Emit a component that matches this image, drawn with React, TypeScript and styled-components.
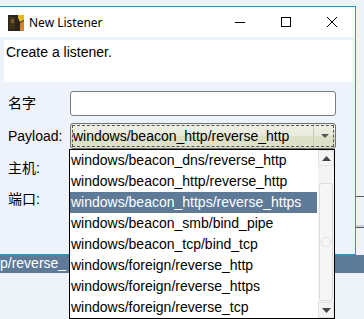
import React from 'react';
import styled, { createGlobalStyle } from 'styled-components';

const GlobalStyle = createGlobalStyle`
  html, body { margin: 0; padding: 0; }
  body { background: #eef2f9; font-family: "Liberation Sans", Arial, sans-serif; }
`;

const payloads = [
    'windows/beacon_dns/reverse_http',
    'windows/beacon_http/reverse_http',
    'windows/beacon_https/reverse_https',
    'windows/beacon_smb/bind_pipe',
    'windows/beacon_tcp/bind_tcp',
    'windows/foreign/reverse_http',
    'windows/foreign/reverse_https',
    'windows/foreign/reverse_tcp',
];

const App: React.FC = () => {
    const selected = 2;

    return (
        <Desktop>
            <GlobalStyle />
            <BackApp>
                <BackTop>
                    <BackSide />
                </BackTop>
                <BackRow>p/reverse_</BackRow>
            </BackApp>

            <Window>
                <TitleBar>
                    <AppIcon viewBox="0 0 16 16">
                        <rect width="16" height="16" fill="#2a241a" />
                        <rect x="1" y="2" width="6" height="12" fill="#3e321a" />
                        <path d="M10 0 L16 0 L16 5 L12 7 L10 3 Z" fill="#e9b81c" />
                        <path d="M12 8 L16 6 L16 16 L12 16 Z" fill="#d9812c" />
                        <rect x="3" y="4" width="3" height="4" fill="#7a5d26" />
                    </AppIcon>
                    <Title>New Listener</Title>
                    <Controls>
                        <CtrlButton>
                            <svg width="12" height="12" viewBox="0 0 12 12"><path d="M1 6.5 H11" stroke="#000" strokeWidth="1" /></svg>
                        </CtrlButton>
                        <CtrlButton>
                            <svg width="12" height="12" viewBox="0 0 12 12"><rect x="1.5" y="1.5" width="9" height="9" fill="none" stroke="#000" strokeWidth="1" /></svg>
                        </CtrlButton>
                        <CtrlButton>
                            <svg width="12" height="12" viewBox="0 0 12 12"><path d="M1 1 L11 11 M11 1 L1 11" stroke="#000" strokeWidth="1" /></svg>
                        </CtrlButton>
                    </Controls>
                </TitleBar>

                <Client>
                    <Description>Create a listener.</Description>
                    <Form>
                        <FieldRow $h={32}>
                            <Label $cjk>名字</Label>
                            <TextInput />
                        </FieldRow>
                        <FieldRow $h={33}>
                            <Label>Payload:</Label>
                            <Combo>
                                <ComboText>windows/beacon_http/reverse_http</ComboText>
                                <ComboArrow>
                                    <svg width="8" height="5" viewBox="0 0 8 5"><path d="M0 0 H8 L4 4 Z" fill="#555" /></svg>
                                </ComboArrow>
                            </Combo>
                        </FieldRow>
                        <FieldRow $h={31}>
                            <Label $cjk>主机:</Label>
                        </FieldRow>
                        <FieldRow $h={30}>
                            <Label $cjk>端口:</Label>
                        </FieldRow>
                    </Form>
                </Client>
            </Window>

            <DropList>
                <Items>
                    {payloads.map((p, i) => (
                        <Item key={p} $active={i === selected}>{p}</Item>
                    ))}
                </Items>
                <ScrollBar>
                    <ScrollBtn>
                        <svg width="9" height="5" viewBox="0 0 9 5"><path d="M0 5 H9 L4.5 0 Z" fill="#444" /></svg>
                    </ScrollBtn>
                    <Track>
                        <Thumb>
                            <Grip />
                        </Thumb>
                    </Track>
                    <ScrollBtn>
                        <svg width="9" height="5" viewBox="0 0 9 5"><path d="M0 0 H9 L4.5 5 Z" fill="#444" /></svg>
                    </ScrollBtn>
                </ScrollBar>
            </DropList>
        </Desktop>
    );
}
export default App;


const Desktop = styled.div`
    position: relative;
    width: 364px;
    height: 319px;
    overflow: hidden;
    background: #eef2f9;
`;

const BackApp = styled.div`
    position: absolute;
    inset: 0;
    display: flex;
    flex-direction: column;
`;

const BackTop = styled.div`
    height: 255px;
    display: flex;
    justify-content: flex-end;
`;

const BackSide = styled.div`
    width: 8px;
    margin-top: 196px;
    height: 30px;
    border-top: 1px solid #555a66;
    border-bottom: 1px solid #555a66;
    box-shadow: inset 0 -2px 0 #c9d2e2;
`;

const BackRow = styled.div`
    height: 18px;
    background: #5d7a98;
    color: #fff;
    font-size: 14px;
    line-height: 17px;
    white-space: nowrap;
`;

const Window = styled.div`
    position: absolute;
    left: -1px;
    top: 6px;
    width: 355px;
    height: 247px;
    border: 1px solid #1aa0c4;
    background: #eef2fa;
    display: flex;
    flex-direction: column;
`;

const TitleBar = styled.div`
    height: 30px;
    background: #fff;
    display: flex;
    align-items: center;
    padding-left: 8px;
`;

const AppIcon = styled.svg`
    width: 16px;
    height: 16px;
    margin-top: 1px;
`;

const Title = styled.span`
    margin-left: 5px;
    font-family: "Noto Sans", "Open Sans", sans-serif;
    font-size: 12px;
    color: #000;
    flex: 1;
`;

const Controls = styled.div`
    display: flex;
    height: 100%;
`;

const CtrlButton = styled.div`
    width: 46px;
    display: flex;
    align-items: center;
    justify-content: center;
`;

const Client = styled.div`
    flex: 1;
    display: flex;
    flex-direction: column;
    padding: 3px 2px 0 4px;
`;

const Description = styled.div`
    height: 42px;
    background: #fff;
    padding: 4px 2px 0;
    box-sizing: border-box;
    font-size: 14px;
    line-height: 16px;
    color: #000;
`;

const Form = styled.div`
    display: flex;
    flex-direction: column;
    padding: 9px 0 0 4px;
`;

const FieldRow = styled.div<{ $h: number }>`
    height: ${p => p.$h}px;
    display: flex;
    align-items: flex-start;
`;

const Label = styled.div<{ $cjk?: boolean }>`
    width: 62px;
    padding-top: ${p => (p.$cjk ? 4 : 5)}px;
    font-family: "Liberation Sans", "Noto Sans CJK SC", sans-serif;
    font-size: 14px;
    line-height: 16px;
    color: #000;
`;

const TextInput = styled.div`
    width: 266px;
    height: 25px;
    box-sizing: border-box;
    background: #fff;
    border: 1px solid #7d7d7d;
    border-radius: 3px;
`;

const Combo = styled.div`
    width: 266px;
    height: 26px;
    box-sizing: border-box;
    border: 1px solid #707070;
    border-radius: 3px;
    background: linear-gradient(#eef0e4 0%, #e8ebdb 48%, #dce1c6 52%, #dce1c8 100%);
    display: flex;
    align-items: center;
    position: relative;
    &::after {
        content: '';
        position: absolute;
        inset: 1px;
        border: 1px dashed #555;
        border-radius: 1px;
        pointer-events: none;
    }
`;

const ComboText = styled.div`
    flex: 1;
    padding-left: 2px;
    font-size: 14px;
    color: #000;
    white-space: nowrap;
`;

const ComboArrow = styled.div`
    width: 21px;
    height: 100%;
    border-left: 1px solid #c8cbb8;
    display: flex;
    align-items: center;
    justify-content: center;
`;

const DropList = styled.div`
    position: absolute;
    left: 69px;
    top: 149px;
    width: 264px;
    height: 168px;
    border: 1px solid #000;
    background: #fff;
    display: flex;
`;

const Items = styled.div`
    flex: 1;
    display: flex;
    flex-direction: column;
`;

const Item = styled.div<{ $active?: boolean }>`
    height: 21px;
    line-height: 21px;
    padding-left: 1px;
    font-size: 14px;
    white-space: nowrap;
    overflow: hidden;
    color: ${p => (p.$active ? '#fff' : '#000')};
    background: ${p => (p.$active ? '#5d7a98' : 'transparent')};
`;

const ScrollBar = styled.div`
    width: 16px;
    margin-left: 1px;
    background: #f4f4f4;
    display: flex;
    flex-direction: column;
`;

const ScrollBtn = styled.div`
    height: 16px;
    display: flex;
    align-items: center;
    justify-content: center;
    background: #f4f4f4;
    border: 1px solid #e4e4e4;
    box-sizing: border-box;
`;

const Track = styled.div`
    flex: 1;
    padding: 17px 1px 1px;
    display: flex;
`;

const Thumb = styled.div`
    flex: 1;
    border: 1px solid #dcdcdc;
    border-radius: 3px;
    background: #f6f6f6;
    display: flex;
    align-items: center;
    justify-content: center;
`;

const Grip = styled.div`
    width: 8px;
    height: 8px;
    border-radius: 50%;
    border: 1px solid #e2e2e2;
`;
